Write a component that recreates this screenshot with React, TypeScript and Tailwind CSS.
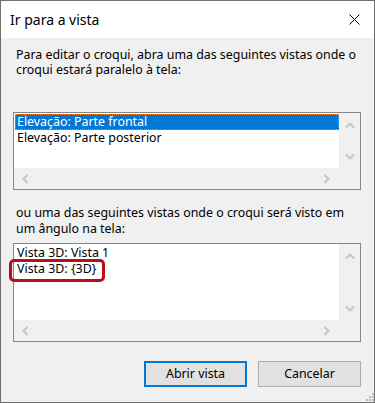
import React from "react";

const FONT = { fontFamily: '"Noto Sans", "Open Sans", sans-serif' };

function Chevron({ dir }: { dir: "up" | "down" | "left" | "right" }) {
  const d = {
    up: "M1 7.5 L5 3.5 L9 7.5",
    down: "M1 2.5 L5 6.5 L9 2.5",
    left: "M7.5 1 L3.5 5 L7.5 9",
    right: "M2.5 1 L6.5 5 L2.5 9",
  }[dir];
  return (
    <svg width="10" height="10" viewBox="0 0 10 10" className="block">
      <path d={d} fill="none" stroke="#c4c4c4" strokeWidth="1.9" />
    </svg>
  );
}

function ListBox({
  items,
  selected,
  heightClass,
}: {
  items: string[];
  selected?: number;
  heightClass: string;
}) {
  return (
    <div className={`flex flex-col border border-[#828790] bg-[#f0f0f0] ${heightClass}`}>
      <div className="flex min-h-0 flex-1">
        <div className="flex-1 bg-white pl-px pt-px">
          {items.map((it, i) => (
            <div
              key={it}
              className={
                i === selected
                  ? "h-[16px] border border-dotted border-[#ff8728] bg-[#0078d7] pl-px leading-[14px] text-white"
                  : "h-[16px] pl-[2px] leading-[16px] text-black"
              }
            >
              {it}
            </div>
          ))}
        </div>
        <div className="flex w-[21px] flex-col items-center justify-between pb-[6px] pt-[7px]">
          <Chevron dir="up" />
          <Chevron dir="down" />
        </div>
      </div>
      <div className="flex h-[21px]">
        <div className="flex flex-1 items-center justify-between pl-[6px] pr-[7px]">
          <Chevron dir="left" />
          <Chevron dir="right" />
        </div>
        <div className="w-[21px]" />
      </div>
    </div>
  );
}

export default function App() {
  return (
    <div
      className="relative flex h-[403px] w-[375px] flex-col border border-[#707070] bg-[#f0f0f0] text-[12.4px] text-black"
      style={FONT}
    >
      <div className="flex h-[37px] shrink-0 items-center justify-between bg-white pl-[9px] pr-[14px]">
        <span className="text-[14px] text-black">Ir para a vista</span>
        <svg width="11" height="11" viewBox="0 0 11 11">
          <path d="M0.5 0.5 L10.5 10.5 M10.5 0.5 L0.5 10.5" stroke="#000" strokeWidth="1" />
        </svg>
      </div>

      <div className="flex flex-col pl-[12px] pr-[13px] pt-[9px]">
        <p className="whitespace-nowrap pl-[3px] leading-[15px]">
          Para editar o croqui, abra uma das seguintes vistas onde o
          <br />
          croqui estará paralelo à tela:
        </p>

        <div className="mt-[35px]">
          <ListBox
            heightClass="h-[78px]"
            items={["Elevação: Parte frontal", "Elevação: Parte posterior"]}
            selected={0}
          />
        </div>

        <p className="mt-[15px] whitespace-nowrap pl-[3px] leading-[16px]">
          ou uma das seguintes vistas onde o croqui será visto em
          <br />
          um ângulo na tela:
        </p>

        <div className="mt-[6px]">
          <ListBox heightClass="h-[99px]" items={["Vista 3D: Vista 1", "Vista 3D: {3D}"]} />
        </div>

        <div className="mt-[19px] flex justify-end gap-[11px]">
          <button className="h-[26px] w-[103px] border-2 border-[#0078d7] bg-[#e1e1e1] text-black">
            Abrir vista
          </button>
          <button className="h-[26px] w-[103px] border border-[#adadad] bg-[#e1e1e1] text-black">
            Cancelar
          </button>
        </div>
      </div>

      <div className="absolute left-[8px] top-[258px] h-[23px] w-[96px] rounded-[5px] border-[3px] border-[#b8101a]" />

      <svg className="absolute bottom-px right-0" width="8" height="8" viewBox="0 0 8 8">
        <g fill="#bcbcbc">
          <rect x="6" y="0" width="2" height="2" />
          <rect x="3" y="3" width="2" height="2" />
          <rect x="6" y="3" width="2" height="2" />
          <rect x="0" y="6" width="2" height="2" />
          <rect x="3" y="6" width="2" height="2" />
          <rect x="6" y="6" width="2" height="2" />
        </g>
      </svg>
    </div>
  );
}
